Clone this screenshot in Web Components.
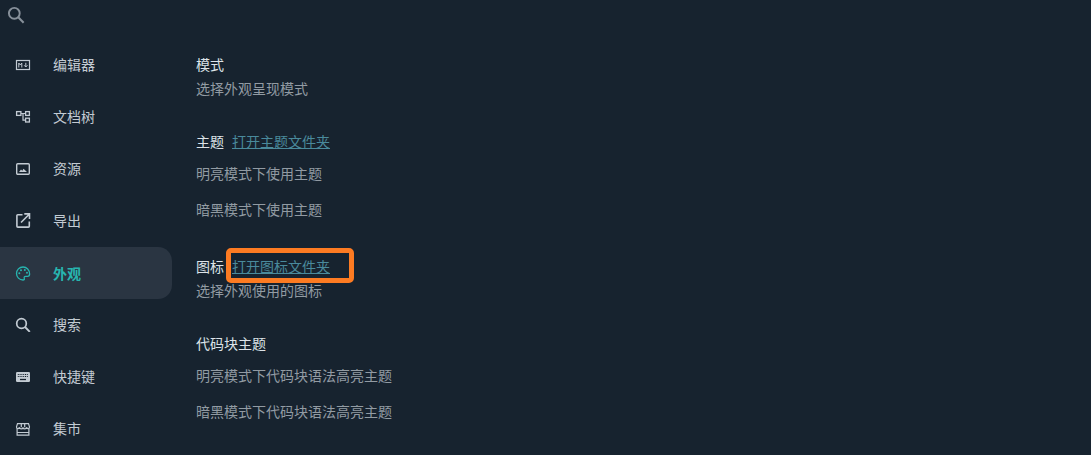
<!DOCTYPE html>
<html lang="zh">
<head>
<meta charset="utf-8">
<title>外观</title>
<style>
    html, body {
        margin: 0;
        height: 100%;
        overflow: hidden;
        background: #17232f;
    }

    body {
        font-family: "Noto Sans CJK SC", "Liberation Sans", sans-serif;
        font-size: 14px;
    }
</style>
</head>
<body>
<settings-page>
    <nav-item slot="nav" icon="markdown" label="编辑器"></nav-item>
    <nav-item slot="nav" icon="tree" label="文档树"></nav-item>
    <nav-item slot="nav" icon="image" label="资源"></nav-item>
    <nav-item slot="nav" icon="export" label="导出"></nav-item>
    <nav-item slot="nav" icon="palette" label="外观" active></nav-item>
    <nav-item slot="nav" icon="find" label="搜索"></nav-item>
    <nav-item slot="nav" icon="keyboard" label="快捷键"></nav-item>
    <nav-item slot="nav" icon="store" label="集市"></nav-item>

    <setting-group title="模式" style="height:77px">
        <setting-line>选择外观呈现模式</setting-line>
    </setting-group>
    <setting-group title="主题" link="打开主题文件夹" style="height:125px">
        <setting-line gap="8">明亮模式下使用主题</setting-line>
        <setting-line gap="12">暗黑模式下使用主题</setting-line>
    </setting-group>
    <setting-group title="图标" link="打开图标文件夹" marked style="height:77px">
        <setting-line>选择外观使用的图标</setting-line>
    </setting-group>
    <setting-group title="代码块主题">
        <setting-line gap="8">明亮模式下代码块语法高亮主题</setting-line>
        <setting-line gap="12">暗黑模式下代码块语法高亮主题</setting-line>
    </setting-group>
</settings-page>

<script>
const searchShape = '<circle cx="6.5" cy="6.5" r="4.8" fill="none" stroke="currentColor" stroke-width="1.7"/><path d="M10 10l4.8 4.8" fill="none" stroke="currentColor" stroke-width="1.9"/>';

const iconPaths = {
    markdown: '<rect x="1.5" y="4.5" width="13" height="9" fill="none" stroke="currentColor" stroke-width="1.2"/><path d="M3.8 11.500V7l1.500 2 1.500-2v4.500M10.800 6.800v4M9.200 9.300l1.600 1.700 1.600-1.700" fill="none" stroke="currentColor" stroke-width="1"/>',
    tree: '<path d="M6 5.500h4M8 5.500v6.600h2" fill="none" stroke="currentColor" stroke-width="1.200"/><rect x="1.600" y="3.600" width="4.300" height="3.800" fill="none" stroke="currentColor" stroke-width="1.300"/><rect x="10.600" y="3.600" width="3.800" height="3.800" fill="none" stroke="currentColor" stroke-width="1.300"/><rect x="10.600" y="10.200" width="3.800" height="3.800" fill="none" stroke="currentColor" stroke-width="1.300"/>',
    image: '<rect x="1.700" y="3.700" width="12.600" height="10.600" rx="1" fill="none" stroke="currentColor" stroke-width="1.400"/><path d="M4 12l2-2.600 1.300 1.300 1.200-2 3.500 3.300z" fill="currentColor"/>',
    export: '<path d="M7.500 2.700H2.800a.9.900 0 0 0-.9.900v10.600c0 .5.400.9.900.9h10.600c.5 0 .9-.4.900-.9V9.500" fill="none" stroke="currentColor" stroke-width="1.600"/><path d="M6 10.500L14 2.500M9.300 1.900h5.200v5.200" fill="none" stroke="currentColor" stroke-width="1.600"/>',
    palette: '<path d="M8 2a6.500 6.500 0 1 0 0 13c1.200 0 1.600-.8 1.300-1.600-.4-1-.1-2.100 1.300-2.100h2c1.200 0 2-.9 2-2.300C14.600 4.800 11.700 2 8 2z" fill="none" stroke="currentColor" stroke-width="1.300"/><circle cx="4.300" cy="8.300" r="1" fill="currentColor"/><circle cx="6" cy="5.300" r="1" fill="currentColor"/><circle cx="9.800" cy="5.100" r="1" fill="currentColor"/><circle cx="12" cy="7.800" r="1" fill="currentColor"/>',
    search: searchShape,
    find: `<g transform="translate(0 1)">${searchShape}</g>`,
    keyboard: '<rect x="1" y="4" width="14" height="10" rx="1.200" fill="currentColor"/><path d="M2.800 6.500h10.400M2.800 8.500h10.400" stroke="#17232f" stroke-width="1" stroke-dasharray="1 .8"/><path d="M5 11.500h6" stroke="#17232f" stroke-width="1.300"/>',
    store: '<path d="M2.500 3.600h11l1 3.200a1.500 1.500 0 0 1-3 .4 1.700 1.700 0 0 1-3.500 0 1.700 1.700 0 0 1-3.500 0 1.500 1.500 0 0 1-3-.4zM6.300 3.600v3.600M9.700 3.600v3.600M2.100 8.200v7h11.800v-7M2.100 12.500h11.800" fill="none" stroke="currentColor" stroke-width="1.200"/>'
};

function svgIcon(name, size) {
    return `<svg width="${size}" height="${size}" viewBox="0 0 16 16" aria-hidden="true">${iconPaths[name]}</svg>`;
}

const pageTemplate = document.createElement('template');
pageTemplate.innerHTML = `
    <style>
        :host {
            display: block;
            height: 455px;
            overflow: hidden;
            background: #17232f;
        }

        .search {
            display: flex;
            height: 39px;
            padding: 6px 0 0 7px;
            box-sizing: border-box;
            color: #87909a;
        }

        .body {
            display: grid;
            grid-template-columns: 172px 1fr;
            column-gap: 24px;
        }

        .nav {
            display: flex;
            flex-direction: column;
        }

        .content {
            padding-top: 13px;
        }
    </style>
    <div class="search">${svgIcon('search', 18)}</div>
    <div class="body">
        <div class="nav"><slot name="nav"></slot></div>
        <div class="content"><slot></slot></div>
    </div>
`;

class SettingsPage extends HTMLElement {
    connectedCallback() {
        if (this.shadowRoot) {
            return;
        }
        const shadow = this.attachShadow({ mode: 'open' });
        shadow.appendChild(pageTemplate.content.cloneNode(true));
    }
}

const navTemplate = document.createElement('template');
navTemplate.innerHTML = `
    <style>
        :host {
            display: flex;
            align-items: center;
            height: 52px;
            box-sizing: border-box;
            padding: 0 0 2px 15px;
            color: #c3cbd3;
            font-size: 14px;
            border-radius: 0 14px 14px 0;
        }

        :host([active]) {
            padding-bottom: 0;
            background: #2a3542;
            color: #27b5b0;
            font-weight: 700;
        }

        .icon {
            display: flex;
            width: 38px;
            flex: none;
        }
    </style>
    <span class="icon"></span>
    <span class="label"></span>
`;

class NavItem extends HTMLElement {
    connectedCallback() {
        if (this.shadowRoot) {
            return;
        }
        const shadow = this.attachShadow({ mode: 'open' });
        shadow.appendChild(navTemplate.content.cloneNode(true));
        shadow.querySelector('.icon').innerHTML = svgIcon(this.getAttribute('icon'), 16);
        shadow.querySelector('.label').textContent = this.getAttribute('label');
    }
}

const groupTemplate = document.createElement('template');
groupTemplate.innerHTML = `
    <style>
        :host {
            display: block;
        }

        .head {
            position: relative;
            display: flex;
            align-items: center;
            gap: 8px;
            height: 24px;
            color: #dde3e8;
            font-size: 14px;
        }

        a {
            color: #4a8a9c;
            text-decoration: underline;
        }

        .mark {
            position: absolute;
            left: 30px;
            top: -6px;
            width: 128px;
            height: 35px;
            box-sizing: border-box;
            border: 5px solid #fd7b22;
            border-radius: 5px;
        }
    </style>
    <div class="head"><span class="title"></span><a></a></div>
    <slot></slot>
`;

class SettingGroup extends HTMLElement {
    connectedCallback() {
        if (this.shadowRoot) {
            return;
        }
        const shadow = this.attachShadow({ mode: 'open' });
        shadow.appendChild(groupTemplate.content.cloneNode(true));
        shadow.querySelector('.title').textContent = this.getAttribute('title');
        const link = shadow.querySelector('a');
        if (this.hasAttribute('link')) {
            link.textContent = this.getAttribute('link');
        } else {
            link.remove();
        }
        if (this.hasAttribute('marked')) {
            const mark = document.createElement('span');
            mark.className = 'mark';
            shadow.querySelector('.head').appendChild(mark);
        }
        this.removeAttribute('title');
    }
}

const lineTemplate = document.createElement('template');
lineTemplate.innerHTML = `
    <style>
        :host {
            display: flex;
            align-items: center;
            height: 24px;
            color: #929ba3;
            font-size: 14px;
        }
    </style>
    <slot></slot>
`;

class SettingLine extends HTMLElement {
    connectedCallback() {
        if (this.shadowRoot) {
            return;
        }
        const shadow = this.attachShadow({ mode: 'open' });
        shadow.appendChild(lineTemplate.content.cloneNode(true));
        if (this.hasAttribute('gap')) {
            this.style.marginTop = `${this.getAttribute('gap')}px`;
        }
    }
}

customElements.define('settings-page', SettingsPage);
customElements.define('nav-item', NavItem);
customElements.define('setting-group', SettingGroup);
customElements.define('setting-line', SettingLine);
</script>
</body>
</html>
